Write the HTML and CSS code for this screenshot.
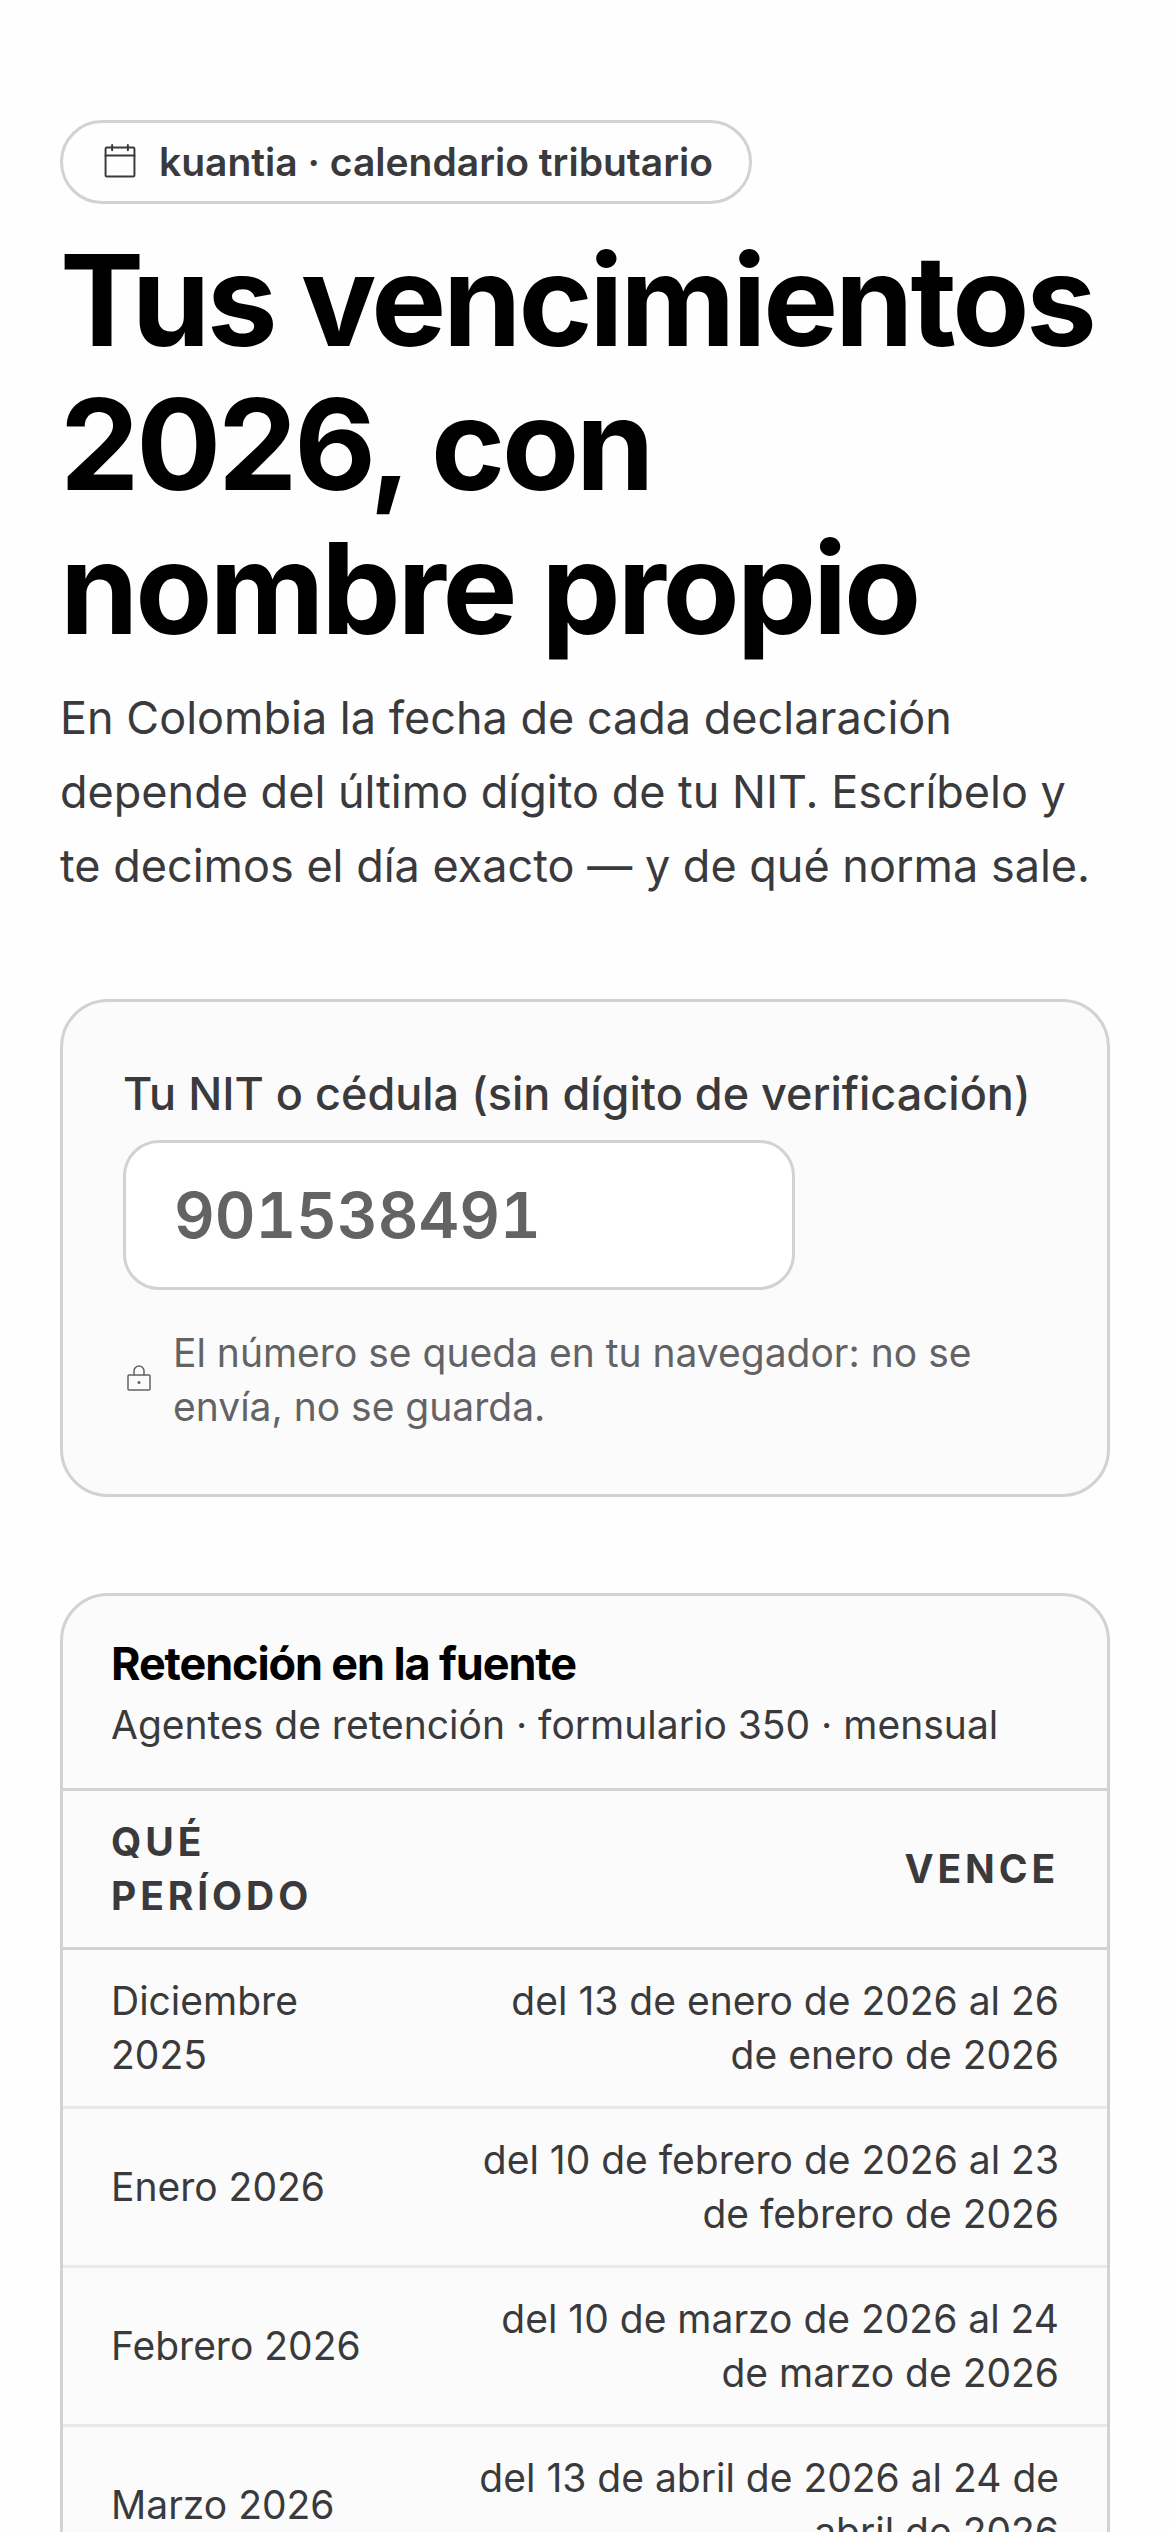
FILE: index.html
```html
<!DOCTYPE html>
<html lang="es">
<head>
  <meta charset="UTF-8">
  <meta name="viewport" content="width=device-width, initial-scale=1.0">
  <title>Calendario tributario 2026</title>
  <link rel="stylesheet" href="styles.css">
</head>
<body>
  <main class="page">
    <header class="hero">
      <span class="pill">
        <svg class="pill-icon" viewBox="0 0 256 256" aria-hidden="true">
          <rect x="40" y="40" width="176" height="176" rx="8"/>
          <path d="M176 24v32M80 24v32M40 88h176"/>
        </svg>
        kuantia · calendario tributario
      </span>
      <h1>Tus vencimientos 2026, con nombre propio</h1>
      <p class="lead">En Colombia la fecha de cada declaración depende del último dígito de tu NIT. Escríbelo y te decimos el día exacto — y de qué norma sale.</p>
    </header>

    <section class="card nit-card">
      <label for="nit">Tu NIT o cédula (sin dígito de verificación)</label>
      <input type="text" id="nit" inputmode="numeric" placeholder="901538491">
      <p class="hint">
        <svg class="hint-icon" viewBox="0 0 256 256" aria-hidden="true">
          <rect x="40" y="88" width="176" height="120" rx="8"/>
          <path d="M88 88V56a40 40 0 0 1 80 0v32"/>
          <circle class="dot" cx="128" cy="148" r="12"/>
        </svg>
        <span>El número se queda en tu navegador: no se envía, no se guarda.</span>
      </p>
    </section>

    <section class="card">
      <div class="card-head">
        <h2>Retención en la fuente</h2>
        <p>Agentes de retención · formulario 350 · mensual</p>
      </div>
      <table>
        <thead>
          <tr><th>Qué período</th><th>Vence</th></tr>
        </thead>
        <tbody>
          <tr><td>Diciembre 2025</td><td>del 13 de enero de 2026 al 26 de enero de 2026</td></tr>
          <tr><td>Enero 2026</td><td>del 10 de febrero de 2026 al 23 de febrero de 2026</td></tr>
          <tr><td>Febrero 2026</td><td>del 10 de marzo de 2026 al 24 de marzo de 2026</td></tr>
          <tr><td>Marzo 2026</td><td>del 13 de abril de 2026 al 24 de abril de 2026</td></tr>
        </tbody>
      </table>
    </section>
  </main>
</body>
</html>
```
FILE: styles.css
```css
* {
  box-sizing: border-box;
}
body {
  margin: 0;
  background: #fefefe;
  color: #3a3a3c;
  font-family: Inter, "Liberation Sans", sans-serif;
  font-size: 39px;
  line-height: 54px;
}
h1, h2, p {
  margin: 0;
}
svg {
  flex: none;
  fill: none;
  stroke: currentColor;
  stroke-width: 12;
  stroke-linecap: round;
  stroke-linejoin: round;
}
.page {
  display: flex;
  flex-direction: column;
  gap: 96px;
  padding: 120px 60px;
}
.hero {
  display: flex;
  flex-direction: column;
  align-items: flex-start;
}
.pill {
  display: flex;
  align-items: center;
  gap: 18px;
  padding: 12px 36px;
  border: 3px solid #d1d1d6;
  border-radius: 42px;
  font-weight: 600;
}
.pill-icon {
  width: 42px;
  height: 42px;
}
h1 {
  margin: 24px 0 21px;
  color: #000;
  font-size: 126px;
  font-weight: 700;
  line-height: 144px;
  letter-spacing: -0.025em;
}
.lead {
  font-size: 45px;
  line-height: 74px;
}
.card {
  border: 3px solid #d1d1d6;
  border-radius: 48px;
  background: #fbfbfb;
  overflow: hidden;
}
.nit-card {
  display: flex;
  flex-direction: column;
  padding: 60px;
}
.nit-card label {
  font-size: 45px;
  font-weight: 500;
  line-height: 63px;
}
.nit-card input {
  width: 100%;
  max-width: 672px;
  height: 150px;
  margin-top: 15px;
  padding: 0 48px;
  border: 3px solid #d1d1d6;
  border-radius: 36px;
  background: #fff;
  color: #000;
  font-family: inherit;
  font-size: 63px;
  font-weight: 600;
  font-variant-numeric: tabular-nums;
}
.nit-card input::placeholder {
  color: #636366;
  opacity: 1;
}
.hint {
  display: flex;
  align-items: center;
  gap: 18px;
  margin-top: 36px;
  color: #636366;
}
.hint-icon {
  width: 32px;
  height: 32px;
}
.dot {
  fill: currentColor;
  stroke: none;
}
.card-head {
  padding: 36px 48px;
  border-bottom: 3px solid #d1d1d6;
}
h2 {
  margin-bottom: 3px;
  color: #000;
  font-size: 45px;
  font-weight: 700;
  line-height: 63px;
  letter-spacing: -0.025em;
}
table {
  width: 100%;
  border-collapse: collapse;
}
th, td {
  padding: 24px 48px;
  border-bottom: 3px solid #e9e9eb;
  text-align: left;
}
th {
  border-color: #d1d1d6;
  font-weight: 700;
  letter-spacing: 0.1em;
  text-transform: uppercase;
}
th:last-child, td:last-child {
  text-align: right;
}
```
